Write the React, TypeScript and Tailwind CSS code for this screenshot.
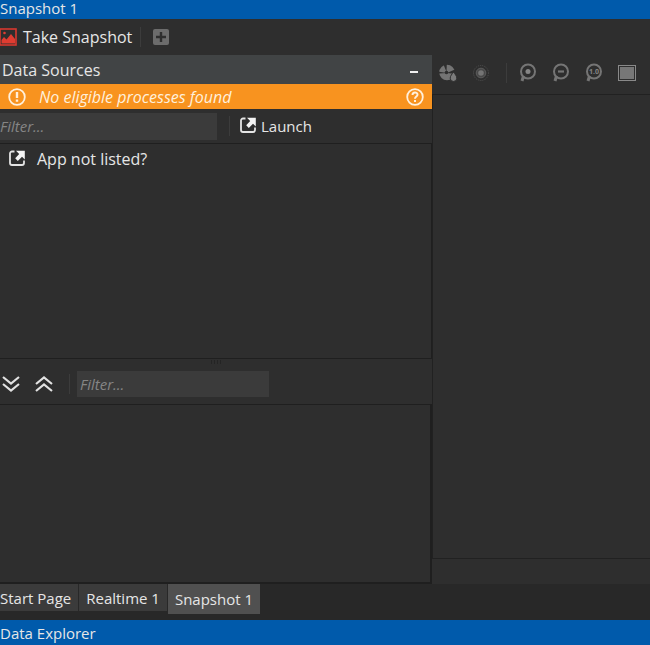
import React from "react";

function PictureIcon() {
  return (
    <svg viewBox="0 0 18 18" className="h-[18px] w-[18px] shrink-0" aria-hidden="true">
      <rect x="0" y="1" width="16" height="16" fill="none" stroke="#d8382f" strokeWidth="1.6" />
      <path d="M1.5 15.5V12l2.5-3 2.5 2.5L11 6l4 5v4.500Z" fill="#e03c31" />
      <circle cx="4.500" cy="5" r="1.300" fill="#e03c31" />
    </svg>
  );
}

function LaunchIcon() {
  return (
    <svg viewBox="0 0 16 18" className="h-[18px] w-4 shrink-0" fill="none" aria-hidden="true">
      <path d="M5.500 1.500H3A2 2 0 0 0 1 3.500V13a2 2 0 0 0 2 2h10a2 2 0 0 0 2-2V10.500" stroke="#e4e4e4" strokeWidth="1.800" />
      <path d="M7 .7H15.800V9.500l-2.800-2.800-4.200 4.200-2.600-2.600 4-4.200Z" fill="#f4f4f4" />
    </svg>
  );
}

function Chevrons({ up = false }: { up?: boolean }) {
  return (
    <svg viewBox="0 0 18 16" className="h-4 w-[18px]" fill="none" stroke="#e2e2e2" strokeWidth="2.2" aria-hidden="true">
      {up ? <path d="m1 8 8-6.500L17 8M1 15l8-6.500L17 15" /> : <path d="m1 1 8 6.500L17 1M1 8l8 6.500L17 8" />}
    </svg>
  );
}

function Magnifier({ children }: { children: React.ReactNode }) {
  return (
    <svg viewBox="0 0 18 20" className="h-5 w-[18px]" fill="none" stroke="#757575" aria-hidden="true">
      <circle cx="9" cy="8.500" r="7" strokeWidth="2" />
      <path d="m4.500 13-1.500 5" strokeWidth="3" />
      {children}
    </svg>
  );
}

function Divider() {
  return <span className="h-5 w-px shrink-0 bg-[#3c3c3c]" />;
}

function ToolButton({ label, children }: { label: string; children: React.ReactNode }) {
  return (
    <button type="button" aria-label={label} className="flex h-5 w-[18px] shrink-0 items-center justify-center">
      {children}
    </button>
  );
}

export default function App() {
  return (
    <div className="flex min-h-screen flex-col bg-[#2e2e2e] font-['Open_Sans','Noto_Sans',sans-serif] text-[16px] leading-5 text-[#e6e6e6]">
      <header className="h-[19px] shrink-0 bg-[#005aab]">
        <h1 className="text-[15px] leading-4">Snapshot 1</h1>
      </header>

      <div className="flex h-9 shrink-0 items-center gap-2">
        <button type="button" className="flex items-center gap-[5px]">
          <PictureIcon />
          <span>Take Snapshot</span>
        </button>
        <span className="flex items-center gap-3">
          <Divider />
          <button type="button" aria-label="Add">
            <svg viewBox="0 0 16 16" className="h-4 w-4" aria-hidden="true">
              <rect width="16" height="16" rx="2" fill="#6c6c6c" />
              <path d="M8 3v10M3 8h10" stroke="#2e2e2e" strokeWidth="2.400" />
            </svg>
          </button>
        </span>
      </div>

      <main className="flex grow">
        <section className="flex w-[432px] shrink-0 flex-col">
          <div className="flex h-[29px] items-center justify-between bg-[#414445] pr-[14px] pl-[2px]">
            <h2>Data Sources</h2>
            <button type="button" aria-label="Collapse" className="flex h-5 items-center pt-1">
              <span className="h-[2px] w-2 bg-[#f0f0f0]" />
            </button>
          </div>

          <div className="flex h-[25px] items-center bg-[#f8931f] px-2 text-[#fff0dc]">
            <svg viewBox="0 0 18 18" className="h-[18px] w-[18px]" fill="none" stroke="currentColor" aria-hidden="true">
              <circle cx="9" cy="9" r="7.800" strokeWidth="1.800" />
              <path d="M9 4v6M9 11.500v2.300" strokeWidth="2.400" />
            </svg>
            <p className="ml-[13px] grow italic">No eligible processes found</p>
            <button type="button" aria-label="Help">
              <svg viewBox="0 0 18 18" className="h-[18px] w-[18px]" fill="none" stroke="currentColor" aria-hidden="true">
                <circle cx="9" cy="9" r="7.800" strokeWidth="1.800" />
                <path d="M6.500 7c0-3.200 5-3.200 5-.3C11.500 8.500 9 8.500 9 10.700M9 12v2" strokeWidth="2" />
              </svg>
            </button>
          </div>

          <div className="flex h-[34px] items-center">
            <input
              aria-label="Filter data sources"
              placeholder="Filter..."
              className="h-[27px] w-[217px] bg-[#3b3b3b] text-[15px] italic outline-none placeholder:text-[#858585]"
            />
            <span className="ml-3 flex items-center gap-[10px]">
              <Divider />
              <button type="button" className="flex items-center gap-[5px]">
                <LaunchIcon />
                <span className="text-[15px]">Launch</span>
              </button>
            </span>
          </div>

          <div className="min-h-[216px] grow border-y border-r border-[#1f1f1f]">
            <button type="button" className="flex h-[30px] items-center gap-3 px-[9px]">
              <LaunchIcon />
              <span>App not listed?</span>
            </button>
          </div>

          <div className="flex h-[5px] justify-center gap-[2px] pt-px">
            <span className="h-1 w-px bg-[#242424]" />
            <span className="h-1 w-px bg-[#242424]" />
            <span className="h-1 w-px bg-[#242424]" />
            <span className="h-1 w-px bg-[#242424]" />
          </div>

          <div className="flex h-10 items-center pl-[2px]">
            <ToolButton label="Expand all"><Chevrons /></ToolButton>
            <span className="ml-[15px] flex items-center">
              <ToolButton label="Collapse all"><Chevrons up /></ToolButton>
            </span>
            <span className="ml-4 flex items-center gap-[7px]">
              <Divider />
              <input
                aria-label="Filter results"
                placeholder="Filter..."
                className="h-[26px] w-[192px] bg-[#3b3b3b] pl-[3px] text-[15px] italic outline-none placeholder:text-[#858585]"
              />
            </span>
          </div>

          <div className="h-[180px] border-t border-r-2 border-b-2 border-[#1f1f1f]" />
        </section>

        <section className="flex min-w-0 grow flex-col">
          <div className="flex h-10 shrink-0 items-center border-b border-[#212121] pb-1 pl-[7px]">
            <div className="flex items-center gap-[15px]">
              <ToolButton label="Object set">
                <svg viewBox="0 0 18 18" className="h-[18px] w-[18px]" aria-hidden="true">
                  <circle cx="8" cy="8.500" r="7.800" fill="#747474" />
                  <path d="M7.500 8 4.300 0h3.500ZM8 9l9-4v5ZM8 9-.5 9.500v-1.800Z" fill="#2e2e2e" />
                  <circle cx="7.500" cy="8.500" r="1.800" fill="#2e2e2e" />
                  <path d="M14.500 8c1.500 2.200 3.300 3.900 3.300 6.200a3.300 3.300 0 0 1-6.600 0c0-2.300 1.800-4 3.300-6.200Z" fill="#7b7b7b" stroke="#2e2e2e" />
                </svg>
              </ToolButton>
              <ToolButton label="Record">
                <svg viewBox="0 0 18 18" className="h-[18px] w-[18px]" fill="none" aria-hidden="true">
                  <circle cx="9" cy="9" r="7.500" stroke="#505050" strokeWidth="1" strokeDasharray="1 1" />
                  <circle cx="9" cy="9" r="4.800" fill="#484848" stroke="#5c5c5c" strokeWidth="1" />
                  <circle cx="9" cy="9" r="2.800" fill="#747474" />
                </svg>
              </ToolButton>
            </div>
            <div className="ml-4 flex items-center gap-3">
              <Divider />
              <div className="flex items-center gap-[15px]">
                <ToolButton label="Zoom in">
                  <Magnifier><circle cx="9" cy="8.500" r="2.500" fill="#858585" stroke="none" /></Magnifier>
                </ToolButton>
                <ToolButton label="Zoom out">
                  <Magnifier><path d="M6 8.500h6" strokeWidth="2.200" /></Magnifier>
                </ToolButton>
                <ToolButton label="Actual size">
                  <Magnifier>
                    <text x="9" y="11" textAnchor="middle" fontSize="7" fontWeight="700" fill="#858585" stroke="none">1.0</text>
                  </Magnifier>
                </ToolButton>
                <ToolButton label="Fit to window">
                  <svg viewBox="0 0 18 16" className="h-4 w-[18px]" aria-hidden="true">
                    <rect x=".5" y=".5" width="17" height="15" fill="none" stroke="#898989" />
                    <rect x="2" y="2" width="14" height="12" fill="#777" />
                  </svg>
                </ToolButton>
              </div>
            </div>
          </div>
          <div className="grow border-b border-l border-[#212121]" />
          <div className="h-[25px] shrink-0" />
        </section>
      </main>

      <nav className="flex h-9 shrink-0 items-start gap-px bg-[#282828] text-[15px]" aria-label="Documents">
        <button type="button" className="h-[27px] bg-[#3b3b3b] pr-[7px]">Start Page</button>
        <button type="button" className="h-[27px] bg-[#3b3b3b] px-[7px]">Realtime 1</button>
        <button type="button" className="h-[30px] bg-[#505050] px-[7px]" aria-current="page">Snapshot 1</button>
      </nav>

      <footer className="flex h-[25px] shrink-0 items-center bg-[#005aab] text-[15px]">
        <h2>Data Explorer</h2>
      </footer>
    </div>
  );
}
